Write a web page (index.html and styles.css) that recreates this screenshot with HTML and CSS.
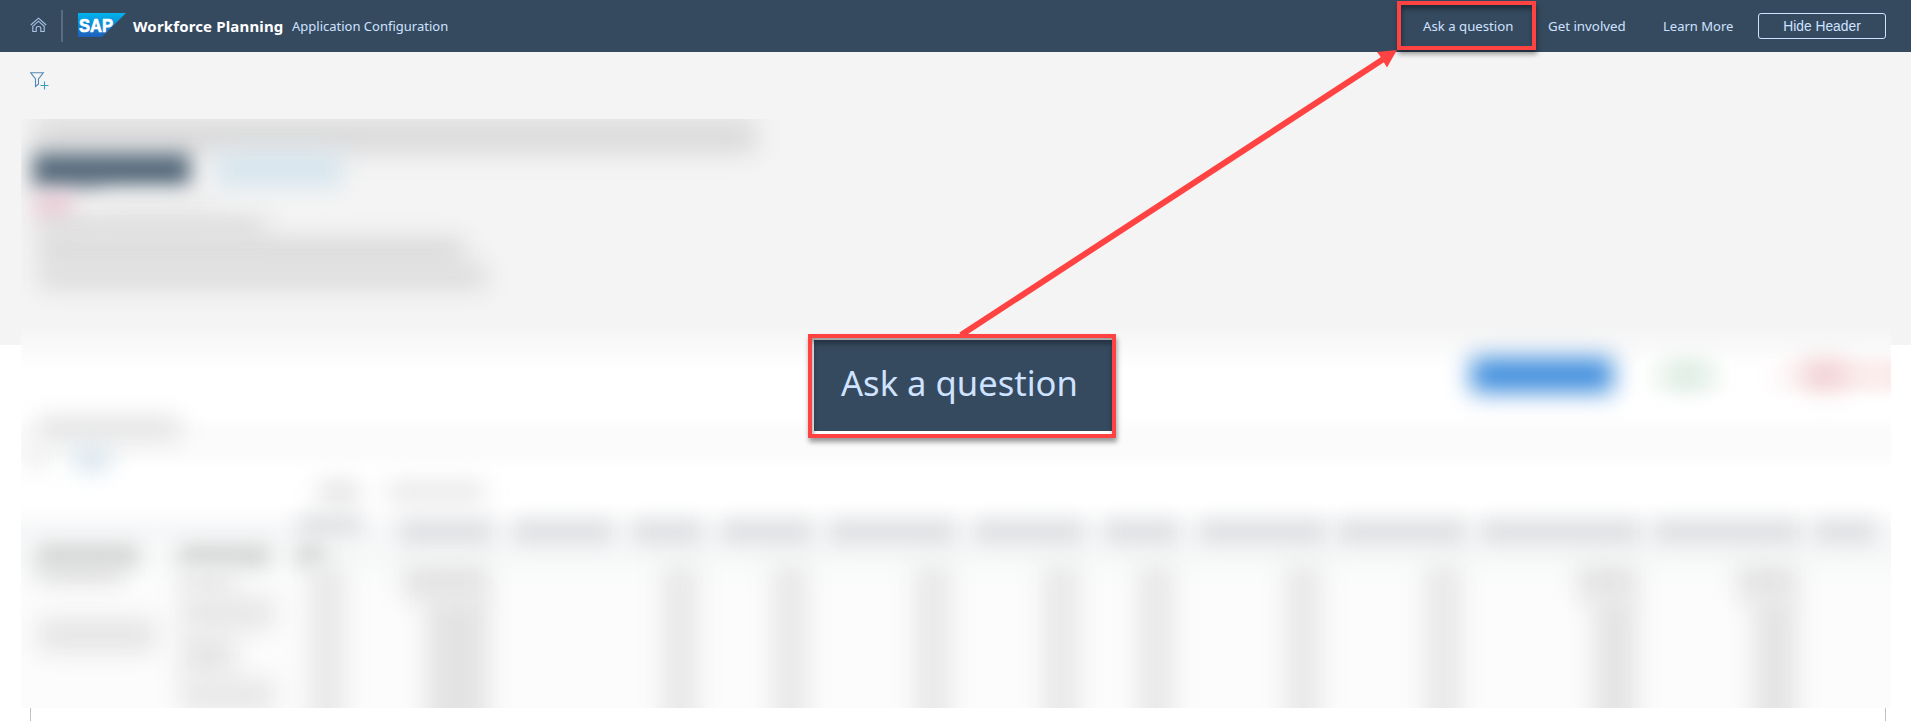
FILE: index.html
```html
<!DOCTYPE html>
<html lang="en">
<head>
<meta charset="utf-8">
<title>Workforce Planning</title>
<link rel="stylesheet" href="styles.css">
</head>
<body>
<header class="shell">
  <svg class="home" width="18" height="16" viewBox="0 0 18 16" fill="none" stroke="#a9c3e6" stroke-width="1.1"><path d="M.8 8 8.500 1.200 16.200 8M2.800 9.300 8.500 4.200l5.700 5.100V14.500H10.800V11.200Q10.800 9.500 8.500 9.500T6.200 11.200V14.500H2.800V9"/></svg>
  <span class="divider"></span>
  <svg class="logo" width="48" height="24" viewBox="0 0 48 24"><defs><linearGradient id="sap" x2="0" y2="1"><stop stop-color="#00b4ee"/><stop offset="1" stop-color="#1e5fbb"/></linearGradient></defs><path d="M0 0H48L24 24H0Z" fill="url(#sap)"/><text x="1" y="19" class="logo-text" textLength="34" lengthAdjust="spacingAndGlyphs">SAP</text></svg>
  <strong class="product">Workforce Planning</strong>
  <span class="subtitle">Application Configuration</span>
  <nav class="links">
    <a class="ask">Ask a question</a>
    <a class="involved">Get involved</a>
    <a class="learn">Learn More</a>
    <button class="hide">Hide Header</button>
  </nav>
</header>
<div class="filterbar">
  <svg width="19" height="18" viewBox="0 0 19 18" fill="none" stroke="#5089b5" stroke-width="1.100"><path d="M.8.8H13.300L8.500 7V12L5.500 14.500V7Z"/><path d="M14.500 9.500V17.500M10.500 13.500H18.500" stroke="#3f9cc0"/></svg>
</div>
<main class="panel">
  <div class="haze">
    <section class="intro">
      <i class="b title"></i>
      <div class="tabs"><i class="b tab-on"></i><i class="b tab"></i></div>
      <div class="note"><i class="b pink"></i><i class="b faint"></i></div>
      <i class="b line1"></i><i class="b line2"></i><i class="b line3"></i>
    </section>
    <section class="actions"><i class="b blue"></i><span class="green"><i class="b"></i></span><span class="red"><i class="b"></i></span></section>
    <i class="b heading"></i>
    <div class="toolbar"><i class="b t1"></i><i class="b t2"></i></div>
    <div class="months"><i class="b m1"></i><i class="b m2"></i></div>
    <div class="grid head"><i></i><i></i><i class="b"></i><i class="b"></i><i class="b"></i><i class="b"></i><i class="b"></i><i class="b"></i><i class="b"></i><i class="b"></i><i class="b"></i><i class="b"></i><i class="b"></i><i class="b"></i><i class="b"></i></div>
    <div class="grid sub"><i class="b"></i><i class="b"></i><i class="b"></i></div>
    <div class="grid body">
      <div class="names"><i class="b n1"></i><i class="b n2"></i></div>
      <div class="types"><i class="b s1"></i><i class="b s2"></i><i class="b s3"></i><i class="b s2"></i></div>
      <div class="num"><i class="b"></i></div>
      <div class="num big"><i class="b"></i><i class="b"></i></div>
      <div></div>
      <div class="num"><i class="b"></i></div>
      <div class="num"><i class="b"></i></div>
      <div class="num"><i class="b"></i></div>
      <div class="num"><i class="b"></i></div>
      <div class="num"><i class="b"></i></div>
      <div class="num"><i class="b"></i></div>
      <div class="num"><i class="b"></i></div>
      <div class="num mid"><i class="b"></i><i class="b"></i></div>
      <div class="num mid"><i class="b"></i><i class="b"></i></div>
      <div></div>
    </div>
  </div>
</main>
<div class="frame"></div>
<svg class="arrow" width="1911" height="721" viewBox="0 0 1911 721"><path d="M961 335 1385 58" stroke="#ff4343" stroke-width="6"/><path d="M1397 50 1387 67.500 1383 61 1380 56 1377 52Z" fill="#ff4343"/></svg>
<div class="mark"></div>
<div class="callout"><div class="callout-text"><span>Ask a question</span></div></div>
</body>
</html>
```

FILE: styles.css
```css
* { box-sizing: border-box; }
body { margin: 0; width: 1911px; height: 721px; overflow: hidden; background: #fff; font-family: "Noto Sans", sans-serif; position: relative; }

/* shell bar */
.shell { height: 52px; background: #354a5f; display: flex; align-items: center; color: #cfe2ff; font-size: 13.300px; padding: 0 25px 0 30px; }
.shell svg, .filterbar svg { display: block; flex: none; }
.home { margin-top: -3px; }
.divider { width: 2px; height: 32px; background: #5b6c7f; margin: -1px 15px 0 13px; }
.logo { margin-top: -2px; }
.logo-text { font: 900 19px "Liberation Sans", sans-serif; fill: #fff; stroke: #fff; stroke-width: .7px; }
.product { color: #fff; font-size: 15px; letter-spacing: .15px; margin: -1px 0 0 7px; width: 159px; white-space: nowrap; }
.subtitle { white-space: nowrap; font-size: 13px; }
.links { margin-left: auto; display: flex; align-items: center; white-space: nowrap; }
.ask { width: 125px; font-size: 13.200px; }
.involved { width: 115px; }
.learn { width: 95px; font-size: 13px; }
.hide { width: 128px; height: 26px; border: 1px solid #cfe2ff; border-radius: 3px; background: none; color: #cfe2ff; font: 13.800px "Liberation Sans", sans-serif; padding: 0; }
.filterbar { height: 67px; background: #f4f4f4; padding: 20px 0 0 30px; }

/* obscured content */
.panel { height: 589px; padding: 0 20px 0 21px; background: linear-gradient(#f4f4f4 226px, #fff 226px); clip-path: inset(0); }
.haze { height: 589px; overflow: hidden; background: linear-gradient(#f4f4f4 206px, #fcfcfc 238px, #fff 252px, #fff 296px, #fbfbfb 312px, #fbfbfb 335px, #fff 350px, #fff 385px, #f6f7f8 412px, #f7f9f9 440px, #fcfcfc 470px); }
.b { display: block; filter: blur(12px); flex: none; }
.intro { height: 226px; }
.title { width: 722px; height: 40px; background: linear-gradient(#e4e4e4 30%, #cfcfd1); margin: -8px 0 0 13px; }
.tabs { display: flex; margin-top: 2px; gap: 27px; padding-left: 12px; }
.tab-on { width: 157px; height: 34px; background: #566a7b; filter: blur(10px); }
.tab { width: 125px; height: 32px; background: #d4e4ee; }
.note { display: flex; margin-top: 9px; gap: 30px; padding-left: 15px; }
.pink { width: 36px; height: 22px; background: #e8bccb; }
.faint { width: 110px; height: 16px; background: #ececec; }
.line1, .line2, .line3 { background: #dadadb; margin-left: 19px; }
.line1 { width: 225px; height: 20px; }
.line2 { width: 424px; height: 27px; }
.line3 { width: 446px; height: 23px; }
.actions { height: 80px; padding: 13px 0 0 1450px; display: flex; gap: 26px; }
.blue { width: 142px; height: 34px; background: #3b8bdc; }
.green, .red { height: 34px; flex: none; display: flex; justify-content: center; align-items: center; filter: blur(6px); }
.green { width: 95px; background: linear-gradient(90deg, #fff, #f0f7f2, #fff); }
.red { width: 165px; background: linear-gradient(90deg, #fff, #fcf1f1 30%, #fbeaea); padding-right: 36px; }
.blue, .green, .red { margin-top: 8px; }
.green .b { width: 42px; height: 24px; background: #d9e9df; }
.red .b { width: 38px; height: 24px; background: #eec6ca; }
.heading { width: 142px; height: 22px; background: #e1e1e1; margin-left: 17px; }
.toolbar { display: flex; gap: 28px; padding: 10px 0 0 7px; }
.t1 { width: 18px; height: 20px; background: #e9e9e9; }
.t2 { width: 36px; height: 20px; background: #cfe0eb; }
.months { display: flex; gap: 28px; padding: 13px 0 0 298px; height: 51px; }
.m1 { width: 40px; height: 21px; background: #e0e0e0; }
.m2 { width: 98px; height: 21px; background: #e7e7e7; }
.grid { display: grid; grid-template-columns: 139px 120px 85px 127px 120px 90px 110px 143px 128px 95px 147px 140px 175px 160px 75px; justify-items: end; }
.head { height: 28px; }
.head .b { height: 24px; background: #dee0e2; filter: blur(10px); }
.head :nth-child(3) { width: 62px; height: 20px; margin: -5px 4px 0 0; }
.head :nth-child(4) { width: 92px; }
.head :nth-child(5) { width: 98px; }
.head :nth-child(6) { width: 69px; }
.head :nth-child(7) { width: 90px; }
.head :nth-child(8) { width: 125px; }
.head :nth-child(9) { width: 108px; }
.head :nth-child(10) { width: 73px; }
.head :nth-child(11) { width: 125px; }
.head :nth-child(12) { width: 127px; }
.head :nth-child(13) { width: 158px; }
.head :nth-child(14) { width: 145px; }
.head :nth-child(15) { width: 60px; }
.sub { height: 22px; justify-items: start; }
.sub .b { background: #d2d3d3; height: 21px; filter: blur(10px); margin-top: -3px; }
.sub :nth-child(1) { width: 100px; margin-left: 17px; }
.sub :nth-child(2) { width: 90px; margin-left: 20px; }
.sub :nth-child(3) { width: 28px; margin-left: 17px; }
.body { grid-template-rows: 190px; }
.names { width: 122px; }
.n1 { width: 85px; height: 16px; background: #d8d8d8; margin-top: -5px; }
.n2 { width: 118px; height: 34px; background: #e5e5e5; margin-top: 37px; }
.types { width: 99px; }
.types .b { background: #e7e7e7; width: 54px; }
.types .s1 { height: 26px; }
.types .s2 { height: 34px; width: 94px; }
.types .s3 { height: 48px; }
.num { width: 36px; margin-right: 4px; }
.num .b { height: 190px; background: #e8e8e8; }
.body .num:nth-child(3) { margin-right: 20px; }
.big { width: 84px; }
.mid { width: 58px; }
.big .b, .mid .b { height: 36px; background: #e3e3e3; margin-left: auto; }
.big .b + .b { height: 154px; width: 62px; }
.mid .b + .b { height: 154px; width: 42px; }
.body .num .b { margin-top: -6px; }
.body .num .b + .b { margin-top: -4px; }
.frame { height: 13px; margin: 0 25px 0 30px; border: solid #bfc1c3; border-width: 0 1px; }

/* annotation */
.arrow { position: absolute; left: 0; top: 0; }
.mark, .callout { position: absolute; border: 4px solid #ff4343; box-shadow: 1px 4px 5px rgba(0,0,0,.4), inset 1px 4px 5px rgba(0,0,0,.4); }
.mark { left: 1397px; top: 1px; width: 139px; height: 49px; }
.callout { left: 808px; top: 334px; width: 308px; height: 104px; background: #fff; padding: 2px 0 3px 2px; }
.callout-text { height: 91px; background: #354a5f; color: #cfe2ff; font-size: 34.600px; line-height: 86px; padding-left: 27px; white-space: nowrap; box-shadow: inset 0 4px 4px rgba(0,0,0,.3); }
```
